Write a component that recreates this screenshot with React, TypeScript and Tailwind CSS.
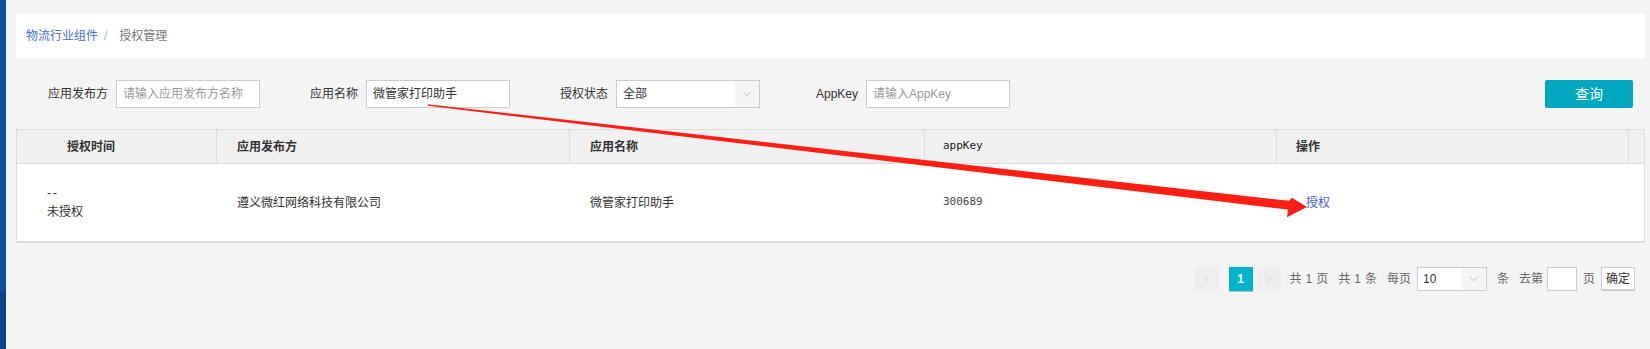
import { ChevronDown, ChevronLeft, ChevronRight } from "lucide-react";

const font = "font-['Liberation_Sans','Noto_Sans_CJK_SC',sans-serif]";
const mono = "font-['DejaVu_Sans_Mono',monospace]";

type Col = { title: string; width: string; headPad: string; bodyPad: string };

const cols: Col[] = [
  { title: "授权时间", width: "w-[200px]", headPad: "pl-[50px]", bodyPad: "pl-[30px]" },
  { title: "应用发布方", width: "w-[353px]", headPad: "pl-[20px]", bodyPad: "pl-[20px]" },
  { title: "应用名称", width: "w-[355px]", headPad: "pl-[20px]", bodyPad: "pl-[20px]" },
  { title: "appKey", width: "w-[352px]", headPad: "pl-[18px]", bodyPad: "pl-[18px]" },
  { title: "操作", width: "w-[352px]", headPad: "pl-[19px]", bodyPad: "pl-[29px]" },
];

const Field = ({
  label,
  labelW,
  value,
  placeholder,
  className = "",
}: {
  label: string;
  labelW: string;
  value?: string;
  placeholder?: string;
  className?: string;
}) => (
  <div className={`flex items-center ${className}`}>
    <span className={`${labelW} text-right text-[12px] text-[#333] mr-[8px] whitespace-nowrap`}>{label}</span>
    <div className="w-[144px] h-[28px] border border-[#ccc] bg-white px-[6px] flex items-center text-[12px]">
      {value ? <span className="text-[#333]">{value}</span> : <span className="text-[#999]">{placeholder}</span>}
    </div>
  </div>
);

// red annotation arrow from the name input to the action link
const Arrow = () => (
  <svg className="absolute left-0 top-0 pointer-events-none" width="1650" height="349" viewBox="0 0 1650 349">
    <polygon
      fill="#fe1e14"
      points="428,104.2 1289,200.8 1292,197.8 1307,207 1287,217.2 1288,209.6 428,105.8"
    />
  </svg>
);

const Counter = ({ pre, n, post, className = "" }: { pre: string; n: string; post: string; className?: string }) => (
  <span className={`flex items-center ${className}`}>
    {pre}
    <span className="mx-[4px]">{n}</span>
    {post}
  </span>
);

export default function App() {
  return (
    <div className={`relative flex w-full h-[349px] bg-[#f4f4f4] overflow-hidden ${font}`}>
      {/* side bar edge */}
      <div className="w-[6px] flex flex-col shrink-0">
        <div className="h-[293px] bg-[#0e4c9e]" />
        <div className="flex-1 bg-[#0c4189]" />
      </div>

      <div className="flex-1 pl-[10px] pr-[5px] pt-[14px] flex flex-col">
        {/* breadcrumb */}
        <div className="h-[44px] bg-white flex items-center pl-[10px] text-[12px]">
          <span className="text-[#3f6fd1]">物流行业组件</span>
          <span className="text-[#aaa] mx-[6px]">/</span>
          <span className="text-[#777] ml-[6px]">授权管理</span>
        </div>

        {/* filters */}
        <div className="mt-[22px] h-[28px] flex items-center pl-[32px]">
          <Field label="应用发布方" labelW="w-[60px]" placeholder="请输入应用发布方名称" />
          <Field label="应用名称" labelW="w-[48px]" value="微管家打印助手" className="ml-[50px]" />
          <div className="flex items-center ml-[50px]">
            <span className="w-[48px] text-right text-[12px] text-[#333] mr-[8px]">授权状态</span>
            <div className="w-[144px] h-[28px] border border-[#ccc] bg-white flex items-center text-[12px]">
              <span className="flex-1 pl-[6px] text-[#333]">全部</span>
              <div className="w-[24px] h-full bg-[#f5f5f5] flex items-center justify-center">
                <ChevronDown className="w-[14px] h-[14px] text-[#aaa]" strokeWidth={1.2} />
              </div>
            </div>
          </div>
          <Field label="AppKey" labelW="w-[48px]" placeholder="请输入AppKey" className="ml-[50px]" />
          <button className="ml-auto mr-[12px] w-[88px] h-[28px] rounded-[2px] bg-[#00a7c0] text-white text-[14px]">
            查询
          </button>
        </div>

        {/* table */}
        <div className="mt-[21px] border border-[#ddd] border-b-2 bg-white">
          <div className="flex h-[34px] bg-[#f0f0f0] border-b border-[#ddd] text-[12px] font-semibold text-[#333]">
            {cols.map((c) => (
              <div key={c.title} className={`${c.width} shrink-0 border-r border-[#ddd] flex items-center ${c.headPad}`}>
                {c.title === "appKey" ? (
                  <span className={`${mono} text-[11px] font-normal text-[#222]`}>{c.title}</span>
                ) : (
                  c.title
                )}
              </div>
            ))}
            <div className="flex-1" />
          </div>
          <div className="flex h-[77px] text-[12px] text-[#333]">
            <div className={`${cols[0].width} shrink-0 flex flex-col justify-center ${cols[0].bodyPad}`}>
              <span className="leading-[19px] tracking-[2px]">--</span>
              <span className="leading-[19px]">未授权</span>
            </div>
            <div className={`${cols[1].width} shrink-0 flex items-center ${cols[1].bodyPad}`}>遵义微红网络科技有限公司</div>
            <div className={`${cols[2].width} shrink-0 flex items-center ${cols[2].bodyPad}`}>微管家打印助手</div>
            <div className={`${cols[3].width} shrink-0 flex items-center ${cols[3].bodyPad} ${mono} text-[11px] text-[#444]`}>
              300689
            </div>
            <div className={`${cols[4].width} shrink-0 flex items-center ${cols[4].bodyPad}`}>
              <span className="text-[#3c5fe0]">授权</span>
            </div>
          </div>
        </div>

        {/* pagination */}
        <div className="mt-[24px] flex items-center justify-end pr-[10px] text-[12px] text-[#666]">
          <div className="w-[24px] h-[24px] bg-[#eee] flex items-center justify-center">
            <ChevronLeft className="w-[14px] h-[14px] text-[#ccc]" strokeWidth={1.2} />
          </div>
          <div className="ml-[10px] w-[24px] h-[24px] bg-[#00b4cf] text-white font-bold flex items-center justify-center shadow-[0_1px_0_#bbb]">
            1
          </div>
          <div className="ml-[4px] w-[24px] h-[24px] bg-[#eee] flex items-center justify-center">
            <ChevronRight className="w-[14px] h-[14px] text-[#ccc]" strokeWidth={1.2} />
          </div>
          <Counter pre="共" n="1" post="页" className="ml-[9px]" />
          <Counter pre="共" n="1" post="条" className="ml-[10px]" />
          <span className="ml-[10px]">每页</span>
          <div className="ml-[6px] w-[70px] h-[24px] border border-[#ccc] bg-white flex items-center">
            <span className="flex-1 pl-[5px] text-[#333]">10</span>
            <div className="w-[24px] h-full bg-[#f5f5f5] flex items-center justify-center">
              <ChevronDown className="w-[14px] h-[14px] text-[#aaa]" strokeWidth={1.2} />
            </div>
          </div>
          <span className="ml-[10px]">条</span>
          <span className="ml-[10px]">去第</span>
          <div className="ml-[4px] w-[30px] h-[24px] border border-[#ccc] bg-white" />
          <span className="ml-[6px]">页</span>
          <button className="ml-[6px] w-[34px] h-[24px] border border-[#ccc] border-b-2 bg-white text-[#333] text-[12px]">
            确定
          </button>
        </div>
      </div>

      <Arrow />
    </div>
  );
}
